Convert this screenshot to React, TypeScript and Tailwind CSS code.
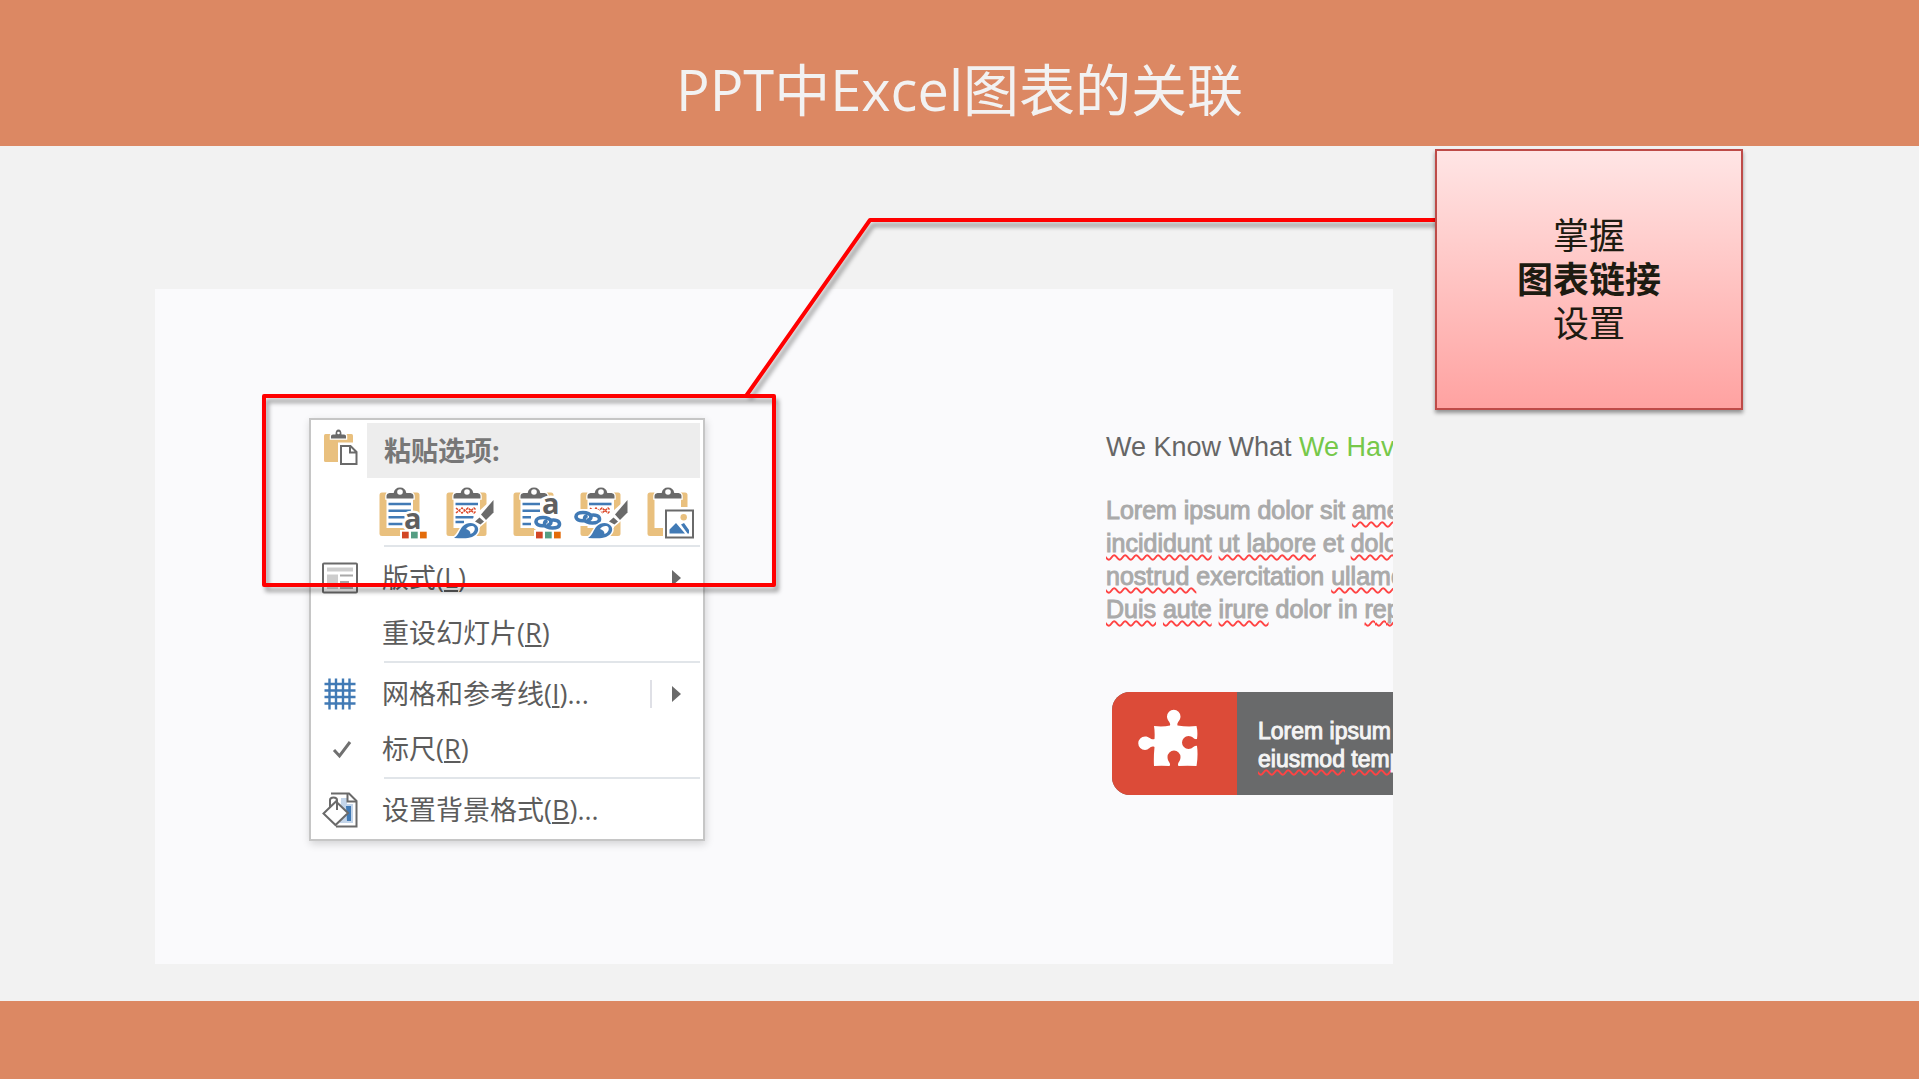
import type { ReactNode } from 'react';

const Clipboard = ({ children }: { children: ReactNode }) => (
  <svg viewBox="0 0 54 56" className="w-[54px] h-14 overflow-visible">
    <rect x="5.5" y="7.5" width="40" height="43.5" rx="2.5" fill="#e9c07e" />
    <rect x="12.5" y="6" width="26.5" height="37" fill="#fff" />
    <path
      d="M12.5 13.5V11q0-2.500 3-3h4.200q1-5.500 6.300-5.500t6.300 5.500h4.200q3 .5 3 3v2.500z"
      fill="#6a6a6a"
      stroke="#fff"
      strokeWidth="2.500"
      paintOrder="stroke"
    />
    <circle cx="26" cy="7" r="2.800" fill="#fff" />
    {children}
  </svg>
);

const LetterA = ({ x, y }: { x: number; y: number }) => (
  <text
    x={x}
    y={y}
    fontFamily="Open Sans"
    fontWeight="700"
    fontSize="29"
    fill="#5f5f5f"
    stroke="#fff"
    strokeWidth="5"
    paintOrder="stroke"
  >
    a
  </text>
);

const Swatches = () => (
  <g>
    <rect x="26" y="45" width="28" height="10" fill="#fff" />
    <rect x="28" y="46.700" width="6.700" height="6.700" fill="#d24726" />
    <rect x="37" y="46.700" width="6.700" height="6.700" fill="#559e83" />
    <rect x="46" y="46.700" width="6.700" height="6.700" fill="#e36c0a" />
  </g>
);

const RedPattern = () => (
  <path
    d="M15 23l3 2.500 3-2.500 3 2.500 3-2.500 3 2.500 3-2.500 2 2M15 28l3-2.500 3 2.500 3-2.500 3 2.500 3-2.500 3 2.500 2-2"
    fill="none"
    stroke="#dc4a2c"
    strokeWidth="1.500"
    strokeDasharray="2.500 .8"
  />
);

const Brush = () => (
  <g>
    <path
      d="M52.500 15v12.500L44 36l-5 4-6-5 4-6zM13 53c5-3 5-8 9-12 4-4 11-4 14 0 3 4 0 9-5 11-5 2-12 1-18 1z"
      fill="#fff"
      stroke="#fff"
      strokeWidth="3"
    />
    <path d="M52.500 15v12.500L45 35l-5-5.500z" fill="#6a6a6a" />
    <path d="M38.500 32.500l4.500 4-3.500 3-5.500-3z" fill="#6a6a6a" />
    <path d="M13 53c5-3 5-8 9-12 4-4 11-4 14 0 3 4 0 9-5 11-5 2-12 1-18 1z" fill="#417ab5" />
    <path d="M25 44c2-3 7-4 8.500-1.500 1 2.500-1 5.500-4 6.500 0-3-2-4-4.500-5z" fill="#fff" />
  </g>
);

const Chain = ({ x, y }: { x: number; y: number }) => (
  <g transform={`translate(${x} ${y})`} fill="none">
    <rect x="-2" y="-2" width="31" height="17" rx="8" fill="#fff" />
    <g stroke="#417ab5" strokeWidth="3.600">
      <path d="M11 9.500C5 10.500 2 8 2 5.500S5 1.500 9 1.500s8 1.500 8 4-1.500 3.500-4 4" />
      <path d="M15 4.500C22 3 25.500 5 25.500 8s-3 4-7 4-8-1.500-8-4 1-3 3-3.500" />
    </g>
  </g>
);

const KeepTheme = () => (
  <Clipboard>
    <path d="M14.500 19h22.500M14.500 25.700h22.500M14.500 32.300h16M14.500 39h14" stroke="#417ab5" strokeWidth="2.600" />
    <LetterA x={30} y={44} />
    <Swatches />
  </Clipboard>
);

const KeepSource = () => (
  <Clipboard>
    <path d="M14.500 19h22.500M14.500 32.300h18M14.500 37h8.500" stroke="#417ab5" strokeWidth="2.400" />
    <RedPattern />
    <Brush />
  </Clipboard>
);

const LinkTheme = () => (
  <Clipboard>
    <path d="M14.500 19h17.500M14.500 25.700h17.500M14.500 32.300h8.500M14.500 39h8.500" stroke="#417ab5" strokeWidth="2.600" />
    <LetterA x={34} y={29} />
    <Chain x={26} y={31} />
    <Swatches />
  </Clipboard>
);

const LinkSource = () => (
  <Clipboard>
    <path d="M14 19h22.500" stroke="#417ab5" strokeWidth="2.600" />
    <RedPattern />
    <Chain x={-1} y={26} />
    <Brush />
  </Clipboard>
);

const AsPicture = () => (
  <Clipboard>
    <rect x="21" y="22" width="33" height="33" fill="#fff" />
    <rect x="24" y="25.500" width="27" height="27" fill="#fff" stroke="#6a6a6a" strokeWidth="2" />
    <circle cx="41.700" cy="32.300" r="3.200" fill="#e9c07e" />
    <path d="M27.500 48.500v-4l6.500-6.500 9 10.500zM39 39.500l3-1.500 5 7v3.500h-1.500z" fill="#417ab5" />
  </Clipboard>
);

const pasteOptions = [
  { label: '使用目标主题', icon: <KeepTheme /> },
  { label: '保留源格式', icon: <KeepSource /> },
  { label: '使用目标主题和链接数据', icon: <LinkTheme /> },
  { label: '保留源格式和链接数据', icon: <LinkSource /> },
  { label: '图片', icon: <AsPicture /> },
];

const PasteIcon = () => (
  <svg viewBox="0 0 36 38" className="w-9 h-[38px]">
    <rect x="2" y="6" width="29" height="28" rx="1.500" fill="#e9c07e" />
    <path
      d="M9 10.500V8q0-1.500 2-1.500h2.500Q13.500 1.500 16.500 1.500t3 5H22q2 0 2 1.500v2.500z"
      fill="#6a6a6a"
      stroke="#fff"
      strokeWidth="2.500"
      paintOrder="stroke"
    />
    <circle cx="16.500" cy="5" r="1.300" fill="#fff" />
    <path d="M16 14.500h20V38H16z" fill="#fff" />
    <path d="M19 18h9.500l6 6v12H19zM28 18v6.500h6.500" fill="#fff" stroke="#6a6a6a" strokeWidth="2" />
  </svg>
);

const LayoutIcon = () => (
  <svg viewBox="0 0 36 32" className="w-9 h-8">
    <rect x="1" y="1.500" width="34" height="29" rx="1" fill="#fff" stroke="#6a6a6a" strokeWidth="2" />
    <path d="M5 5.500h26v4H5zM5 12.500h11v14.500H5z" fill="#cdcdcd" />
    <path d="M18 13.500h13M18 20h9M18 26h13" stroke="#a8a8a8" strokeWidth="2" />
  </svg>
);

const GridIcon = () => (
  <svg viewBox="0 0 36 32" className="w-9 h-8">
    <path
      d="M7.500 .5v31M14 .5v31M21 .5v31M27.500 .5v31M2.500 6h31M2.500 12.500h31M2.500 19h31M2.500 25.500h31"
      stroke="#417ab5"
      strokeWidth="2.400"
    />
  </svg>
);

const CheckIcon = () => (
  <svg viewBox="0 0 36 32" className="w-9 h-8">
    <path d="M12 17l5.500 6L28 9" fill="none" stroke="#707070" strokeWidth="3" />
  </svg>
);

const BackgroundIcon = () => (
  <svg viewBox="0 0 36 36" className="w-9 h-9">
    <path d="M9 1.500h18l7.500 7.500v25.500H14" fill="#fff" stroke="#6a6a6a" strokeWidth="2" />
    <path d="M19 6h6v6h6v19H18z" fill="#c3d5ea" />
    <path d="M25.500 1.500v8h8.500" fill="none" stroke="#6a6a6a" strokeWidth="2" />
    <path d="M24 14h5v15h-4z" fill="#417ab5" />
    <path d="M14 9.500L26 21 13.500 33 1.500 21.500z" fill="#fff" stroke="#6a6a6a" strokeWidth="2" />
    <path d="M8 16V8q0-2.500 3.500-2.500T15 8v10" fill="none" stroke="#6a6a6a" strokeWidth="2" />
  </svg>
);

const Arrow = () => (
  <svg viewBox="0 0 9 16" className="w-[9px] h-4 mr-[22px]">
    <path d="M0 0l9 8-9 8z" fill="#6a6a6a" />
  </svg>
);

const Separator = () => <hr className="mt-px mb-[3px] ml-[73px] mr-[3px] border-0 h-0.5 bg-[#e1e5e9]" />;

interface MenuItemProps {
  icon?: ReactNode;
  label: string;
  accessKey: string;
  suffix?: string;
  children?: ReactNode;
}

function MenuItem({ icon, label, accessKey, suffix = '', children }: MenuItemProps) {
  return (
    <button className="w-full h-[55px] flex items-center text-left text-[27px] text-[#5c5c5c]">
      <span className="w-[55px] pl-[11px] shrink-0">{icon}</span>
      <span className="pl-4 pt-0.5 whitespace-nowrap">
        {label}(<span className="underline decoration-2 underline-offset-2">{accessKey}</span>){suffix}
      </span>
      <span className="ml-auto flex items-center">{children}</span>
    </button>
  );
}

function ContextMenu() {
  return (
    <div className="w-[396px] shrink-0 bg-white border-2 border-[#c6c6c6] pt-[3px] pb-0.5 shadow-[1px_3px_8px_rgba(0,0,0,0.16)]">
      <div className="flex pr-[3px]">
        <div className="w-[55px] pl-[11px] pt-[5px] shrink-0">
          <PasteIcon />
        </div>
        <h2 className="flex-1 h-[55px] ml-px pl-[17px] pt-px flex items-center bg-[#ededed] text-[27px] font-bold text-[#777]">
          粘贴选项:
        </h2>
      </div>

      {/* Paste options */}
      <div className="flex gap-[13px] pl-[63px] pt-[7px] pb-[3px]">
        {pasteOptions.map((option) => (
          <button key={option.label} aria-label={option.label}>
            {option.icon}
          </button>
        ))}
      </div>

      <Separator />
      <MenuItem icon={<LayoutIcon />} label="版式" accessKey="L">
        <Arrow />
      </MenuItem>
      <MenuItem label="重设幻灯片" accessKey="R" />
      <Separator />
      <MenuItem icon={<GridIcon />} label="网格和参考线" accessKey="I" suffix="...">
        <span className="w-0.5 h-7 mr-5 bg-[#dfe0e6]" />
        <Arrow />
      </MenuItem>
      <MenuItem icon={<CheckIcon />} label="标尺" accessKey="R" />
      <Separator />
      <MenuItem icon={<BackgroundIcon />} label="设置背景格式" accessKey="B" suffix="..." />
    </div>
  );
}

// Word flagged by the spell checker
const Typo = ({ children }: { children: ReactNode }) => (
  <span className="underline decoration-wavy decoration-2 decoration-[#ff4343] underline-offset-2 [text-decoration-skip-ink:none]">
    {children}
  </span>
);

function SlideText() {
  return (
    <div className="pt-[13px] whitespace-nowrap font-['Liberation_Sans',sans-serif]">
      <h2 className="text-[27px] leading-8 text-[#666]">
        We Know What <span className="text-[#76c84a]">We Have</span>
      </h2>
      <p className="mt-[31px] text-[25px] leading-[33px] text-[#aaa] [-webkit-text-stroke:1px_#aaa]">
        Lorem ipsum dolor sit <Typo>amet</Typo>
        <br />
        <Typo>incididunt</Typo> <Typo>ut labore</Typo> et <Typo>dolore</Typo>
        <br />
        <Typo>nostrud </Typo>exercitation <Typo>ullamco</Typo>
        <br />
        <Typo>Duis</Typo> <Typo>aute</Typo> <Typo>irure</Typo> dolor in <Typo>reprehenderit</Typo>
      </p>

      <div className="mt-[66px] ml-1.5 h-[103px] flex rounded-l-[18px] overflow-hidden bg-[#696a6b]">
        <div className="w-[125px] shrink-0 bg-[#dc4b38]">
          <svg viewBox="0 0 125 103" className="w-[125px] h-[103px]">
            <path
              d="M42 34q9 1 16-.5c1-3-3-5-3-9a6.700 6.700 0 0 1 13.500 0c0 4-4 6-3 9q10 1.500 19 .5 1.500 6 .5 13c-3 1-4-3-8.500-3a6.500 6.500 0 0 0 0 13c4.500 0 5.500-4 8.500-3 1 7 .5 14-.5 20q-9-.5-18 0c-2-3 2-4 2-9a6.500 6.500 0 0 0-13 0c0 5 4 6 2 9q-8-.5-15.500 0-.5-9 .5-19c-4-2-5 3-9.500 3a6.700 6.700 0 0 1 0-13.500c5 0 6 4 9.500 2.500Q43 40 42 34z"
              fill="#fff"
            />
          </svg>
        </div>
        <p className="pl-[21px] pt-[25px] text-[23px] leading-7 text-[#f4f4f4] [-webkit-text-stroke:1px_#f4f4f4]">
          Lorem ipsum
          <br />
          <Typo>eiusmod</Typo> <Typo>tempor</Typo>
        </p>
      </div>
    </div>
  );
}

// Red frame round the paste options, with a leader running to the note
const Callout = () => (
  <div className="absolute inset-y-0 left-0 -right-[42px] pointer-events-none">
    <svg className="w-full h-full overflow-visible drop-shadow-[3px_5px_2px_rgba(0,0,0,0.35)]">
      <g fill="none" stroke="#ff0000" strokeWidth="4" strokeLinejoin="round">
        <rect x="109" y="250" width="510" height="189" />
        <path d="M591 250L715 74H720" />
        <line x1="715" y1="74" x2="100%" y2="74" />
      </g>
    </svg>
  </div>
);

export default function App() {
  return (
    <div className="min-h-screen flex flex-col bg-[#f2f2f2] font-['Open_Sans','Noto_Sans_CJK_SC',sans-serif]">
      <header className="h-[146px] pt-[31px] flex items-center justify-center bg-[#dc8863]">
        <h1 className="text-[56px] text-[#f2f2f2]">PPT中Excel图表的关联</h1>
      </header>

      <main className="flex-1 flex gap-[42px] pl-[155px] pr-[176px]">
        <div className="relative flex-1 min-w-0 flex">
          <section className="flex-1 min-w-0 mt-[143px] mb-[37px] pt-[129px] pb-20 pl-[154px] flex items-start gap-[401px] overflow-hidden bg-[#fafafc]">
            <ContextMenu />
            <SlideText />
          </section>
          <Callout />
        </div>

        <aside className="relative self-start mt-[3px] w-[308px] h-[261px] shrink-0 flex items-center justify-center border-2 border-[#be4b48] bg-linear-to-b from-[#ffe5e5] to-[#ffa2a1] shadow-[0_3px_4px_rgba(0,0,0,0.4)]">
          <p className="text-center text-4xl leading-11 text-[#1d1b11]">
            掌握
            <br />
            <strong>图表链接</strong>
            <br />
            设置
          </p>
        </aside>
      </main>

      <footer className="h-[78px] bg-[#dc8863]" />
    </div>
  );
}
